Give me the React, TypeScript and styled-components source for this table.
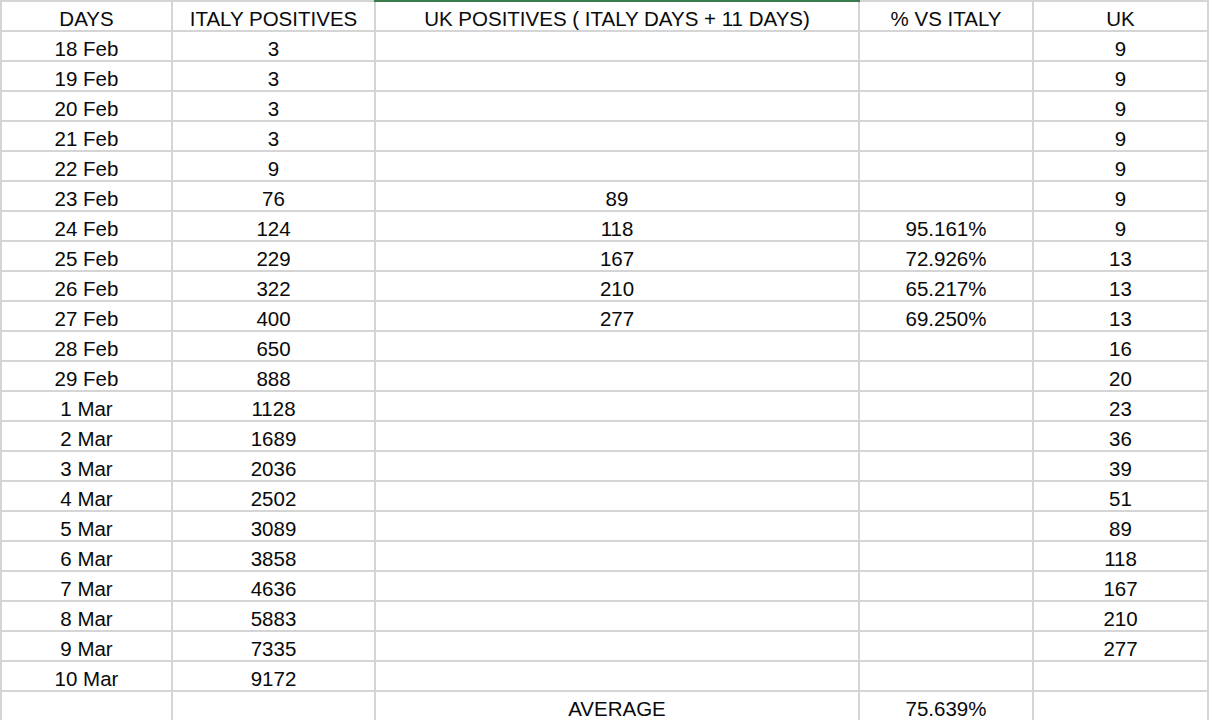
import React from "react";
import styled, { createGlobalStyle } from "styled-components";

const GlobalStyle = createGlobalStyle`
    html, body {
        margin: 0;
        padding: 0;
        background: #ffffff;
        overflow: hidden;
    }
`;

type Row = [string, string, string, string, string];

const header: Row = ["DAYS", "ITALY POSITIVES", "UK POSITIVES ( ITALY DAYS + 11 DAYS)", "% VS ITALY", "UK"];

const rows: Row[] = [
    ["18 Feb", "3", "", "", "9"],
    ["19 Feb", "3", "", "", "9"],
    ["20 Feb", "3", "", "", "9"],
    ["21 Feb", "3", "", "", "9"],
    ["22 Feb", "9", "", "", "9"],
    ["23 Feb", "76", "89", "", "9"],
    ["24 Feb", "124", "118", "95.161%", "9"],
    ["25 Feb", "229", "167", "72.926%", "13"],
    ["26 Feb", "322", "210", "65.217%", "13"],
    ["27 Feb", "400", "277", "69.250%", "13"],
    ["28 Feb", "650", "", "", "16"],
    ["29 Feb", "888", "", "", "20"],
    ["1 Mar", "1128", "", "", "23"],
    ["2 Mar", "1689", "", "", "36"],
    ["3 Mar", "2036", "", "", "39"],
    ["4 Mar", "2502", "", "", "51"],
    ["5 Mar", "3089", "", "", "89"],
    ["6 Mar", "3858", "", "", "118"],
    ["7 Mar", "4636", "", "", "167"],
    ["8 Mar", "5883", "", "", "210"],
    ["9 Mar", "7335", "", "", "277"],
    ["10 Mar", "9172", "", "", ""],
    ["", "", "AVERAGE", "75.639%", ""],
];

export default function App() {
    return (
        <>
            <GlobalStyle />
            <Page>
                <Sheet>
                    {header.map((text, i) => (
                        <Cell key={`h${i}`} selected={i === 2}>
                            {text}
                        </Cell>
                    ))}
                    {rows.map((row, r) =>
                        row.map((text, c) => <Cell key={`${r}-${c}`}>{text}</Cell>)
                    )}
                </Sheet>
            </Page>
        </>
    );
}

const Page = styled.div`
    width: 1212px;
    height: 720px;
    overflow: hidden;
    background: #ffffff;
`;

const Sheet = styled.div`
    display: grid;
    grid-template-columns: 169px 201px 482px 172px 173px;
    grid-auto-rows: 28px;
    gap: 2px;
    padding: 2px;
    width: max-content;
    background: #d5d5d5;
    font-family: "Liberation Sans", Arial, Helvetica, sans-serif;
    font-size: 20.5px;
    color: #0a0a0a;
`;

const Cell = styled.div<{ selected?: boolean }>`
    position: relative;
    background: #ffffff;
    text-align: center;
    line-height: 28px;
    padding-top: 3px;
    white-space: nowrap;
    overflow: visible;

    ${props =>
        props.selected &&
        `
        &::before {
            content: "";
            position: absolute;
            top: -2px;
            left: -2px;
            right: -2px;
            height: 2px;
            background: #3b7a4c;
        }
    `}
`;
